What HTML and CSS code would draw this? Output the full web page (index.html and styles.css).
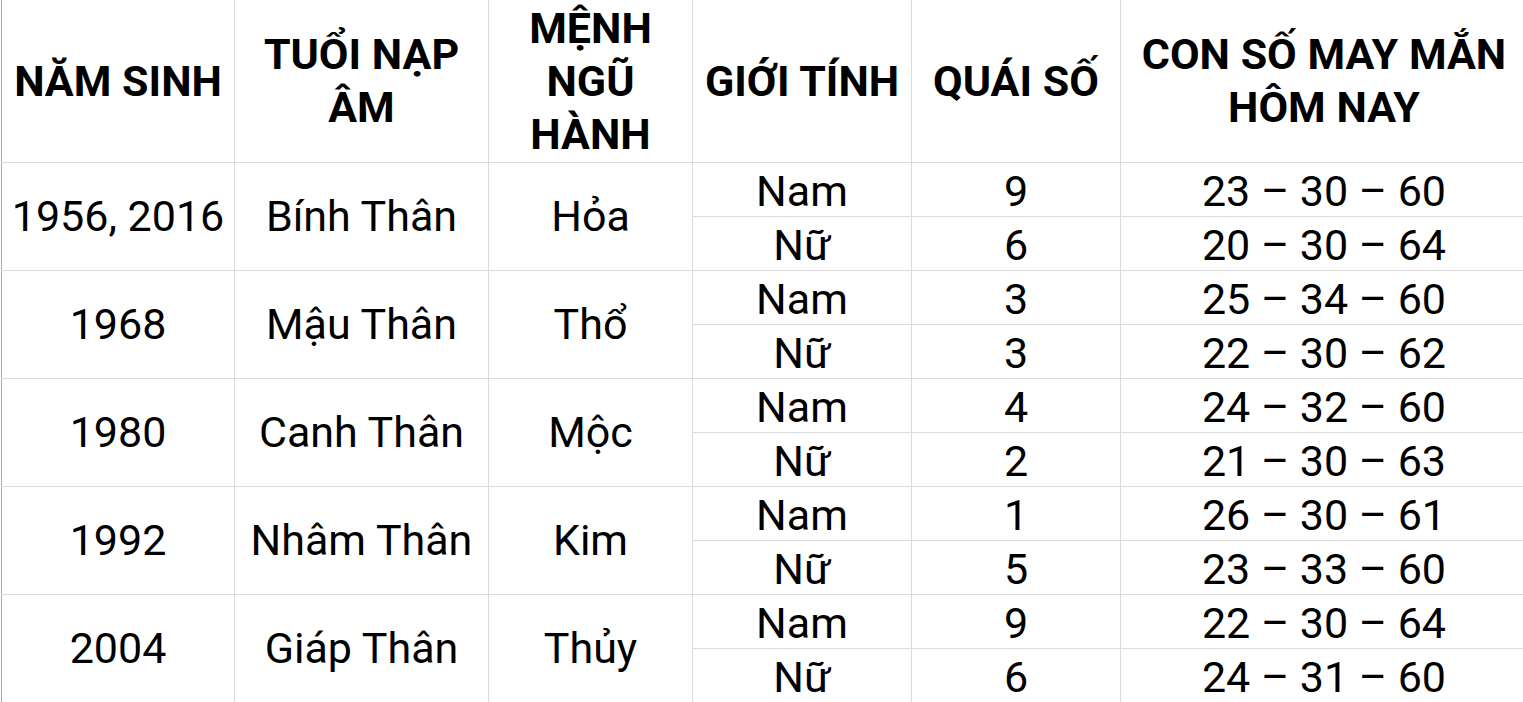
FILE: index.html
```html
<!DOCTYPE html>
<html lang="vi">
<head>
<meta charset="utf-8">
<title>Con số may mắn</title>
<link rel="stylesheet" href="styles.css">
</head>
<body>
<table class="sheet">
  <colgroup>
    <col class="c1"><col class="c2"><col class="c3"><col class="c4"><col class="c5"><col class="c6">
  </colgroup>
  <thead>
    <tr class="head">
      <th class="first">NĂM SINH</th>
      <th>TUỔI NẠP<br>ÂM</th>
      <th>MỆNH<br>NGŨ<br>HÀNH</th>
      <th>GIỚI TÍNH</th>
      <th>QUÁI SỐ</th>
      <th>CON SỐ MAY MẮN<br>HÔM NAY</th>
    </tr>
  </thead>
  <tbody>
    <tr><td class="first merged" rowspan="2">1956, 2016</td><td class="merged" rowspan="2">Bính Thân</td><td class="merged" rowspan="2">Hỏa</td><td>Nam</td><td>9</td><td>23 – 30 – 60</td></tr>
    <tr><td>Nữ</td><td>6</td><td>20 – 30 – 64</td></tr>
    <tr><td class="first merged" rowspan="2">1968</td><td class="merged" rowspan="2">Mậu Thân</td><td class="merged" rowspan="2">Thổ</td><td>Nam</td><td>3</td><td>25 – 34 – 60</td></tr>
    <tr><td>Nữ</td><td>3</td><td>22 – 30 – 62</td></tr>
    <tr><td class="first merged" rowspan="2">1980</td><td class="merged" rowspan="2">Canh Thân</td><td class="merged" rowspan="2">Mộc</td><td>Nam</td><td>4</td><td>24 – 32 – 60</td></tr>
    <tr><td>Nữ</td><td>2</td><td>21 – 30 – 63</td></tr>
    <tr><td class="first merged" rowspan="2">1992</td><td class="merged" rowspan="2">Nhâm Thân</td><td class="merged" rowspan="2">Kim</td><td>Nam</td><td>1</td><td>26 – 30 – 61</td></tr>
    <tr><td>Nữ</td><td>5</td><td>23 – 33 – 60</td></tr>
    <tr><td class="first merged" rowspan="2">2004</td><td class="merged" rowspan="2">Giáp Thân</td><td class="merged" rowspan="2">Thủy</td><td>Nam</td><td>9</td><td>22 – 30 – 64</td></tr>
    <tr><td>Nữ</td><td>6</td><td>24 – 31 – 60</td></tr>
  </tbody>
</table>
</body>
</html>
```

FILE: styles.css
```css
html, body {
  margin: 0;
  padding: 0;
  background: #ffffff;
  overflow: hidden;
}

.sheet {
  border-collapse: collapse;
  table-layout: fixed;
  width: 1526px;
  margin-left: 1px;
  font-family: Roboto, "Noto Sans", sans-serif;
  font-size: 43px;
  color: #000000;
}

.c1 { width: 233px; }
.c2 { width: 254px; }
.c3 { width: 204px; }
.c4 { width: 219px; }
.c5 { width: 209px; }
.c6 { width: 407px; }

.sheet th,
.sheet td {
  border: 1px solid #dadada;
  padding: 0;
  text-align: center;
  vertical-align: middle;
  white-space: nowrap;
}

.sheet th {
  font-weight: 700;
  line-height: 53px;
  padding-top: 1px;
}

.head {
  height: 162px;
}

.sheet tbody tr {
  height: 54px;
}

.sheet td {
  line-height: 50px;
  padding-top: 3px;
  font-weight: 400;
}

.sheet td.merged {
  padding-top: 0;
}

.sheet .first {
  border-left-color: #a8a8a8;
}

.sheet thead th {
  border-top: none;
}
```
